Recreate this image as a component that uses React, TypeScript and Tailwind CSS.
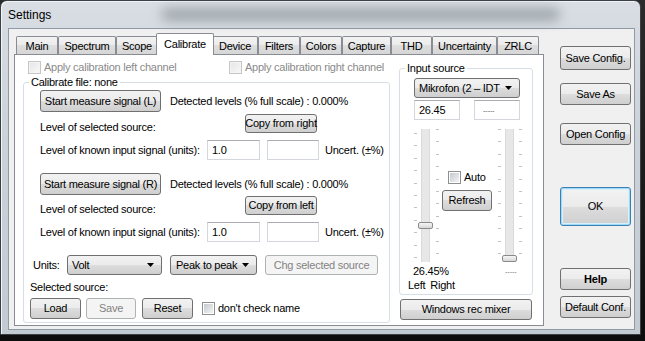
import React from "react";

type BtnProps = {
  label: string;
  className?: string;
  disabled?: boolean;
  bold?: boolean;
  focused?: boolean;
};

const Btn = ({ label, className = "", disabled, bold, focused }: BtnProps) => (
  <div
    className={`flex shrink-0 items-center justify-center rounded-[3px] border ${
      disabled
        ? "border-[#adb2b5] bg-[#f4f4f4] text-[#838383]"
        : focused
        ? "border-[#3c7fb1] bg-[linear-gradient(#f2f2f2_0%,#ebebeb_50%,#dddddd_50%,#cfcfcf_100%)] shadow-[inset_0_0_0_1px_#9fd9f8,inset_0_0_0_2px_#d6f0fc] text-black"
        : "border-[#707070] bg-[linear-gradient(#f2f2f2_0%,#ebebeb_50%,#dddddd_50%,#cfcfcf_100%)] text-black"
    } ${bold ? "font-bold" : ""} ${className}`}
  >
    {label}
  </div>
);

const Check = ({ disabled }: { disabled?: boolean }) => (
  <span
    className={`flex h-[13px] w-[13px] shrink-0 items-center justify-center border ${
      disabled ? "border-[#c6c6c6] bg-[#f4f4f4]" : "border-[#8e8f8f] bg-white"
    }`}
  >
    <span
      className={`h-[9px] w-[9px] ${
        disabled
          ? "bg-[linear-gradient(135deg,#e6e6e6,#f7f7f7)]"
          : "bg-[linear-gradient(135deg,#c4c8ce,#f4f4f4)]"
      }`}
    />
  </span>
);

const Combo = ({ label, className = "" }: { label: string; className?: string }) => (
  <div
    className={`flex h-[20px] shrink-0 items-center justify-between overflow-hidden rounded-[3px] border border-[#707070] bg-[linear-gradient(#f2f2f2_0%,#ebebeb_50%,#dddddd_50%,#cfcfcf_100%)] pl-[4px] pr-[7px] ${className}`}
  >
    <span>{label}</span>
    <svg width="7" height="4" viewBox="0 0 7 4" className="shrink-0">
      <path d="M0 0h7L3.5 4z" fill="#000" />
    </svg>
  </div>
);

const Field = ({ value, className = "" }: { value?: string; className?: string }) => (
  <div
    className={`flex h-[20px] shrink-0 items-center border border-[#d3d6dc] border-t-[#abadb3] bg-white px-[4px] ${className}`}
  >
    {value}
  </div>
);

const Ticks = () => (
  <div className="flex h-[125px] w-[3px] flex-col justify-between self-center">
    {Array.from({ length: 11 }).map((_, i) => (
      <span key={i} className="h-px w-[3px] bg-[#c2c2c2]" />
    ))}
  </div>
);

const Track = ({ thumbTop }: { thumbTop: number }) => (
  <div className="relative h-[133px] w-[9px] border-x border-[#dadada] bg-[#e7e7e7]">
    <div
      className="absolute left-[-4px] h-[7px] w-[15px] rounded-[2px] border border-[#8a8a8a] bg-[linear-gradient(#f6f6f6,#d6d6d6)]"
      style={{ top: thumbTop }}
    />
  </div>
);

const tabs = [
  { name: "Main", w: "w-[42px]" },
  { name: "Spectrum", w: "w-[58px]" },
  { name: "Scope", w: "w-[42px]" },
  { name: "Calibrate", w: "w-[58px]", active: true },
  { name: "Device", w: "w-[46px]" },
  { name: "Filters", w: "w-[42px]" },
  { name: "Colors", w: "w-[42px]" },
  { name: "Capture", w: "w-[49px]" },
  { name: "THD", w: "w-[41px]" },
  { name: "Uncertainty", w: "w-[65px]" },
  { name: "ZRLC", w: "w-[42px]" },
];

const Tabs = () => (
  <div className="flex h-[21px] items-end pl-[2px]">
    {tabs.map((t) =>
      t.active ? (
        <div
          key={t.name}
          className={`relative z-10 -mx-[2px] -mb-px flex h-[22px] shrink-0 items-center justify-center rounded-t-[2px] border border-b-0 border-[#898c95] bg-white pb-[1px] ${t.w}`}
        >
          {t.name}
        </div>
      ) : (
        <div
          key={t.name}
          className={`flex h-[18px] shrink-0 items-center justify-center rounded-t-[2px] border border-b-0 border-[#898c95] bg-[linear-gradient(#f3f3f3_0%,#ebebeb_50%,#dedede_50%,#d6d6d6_100%)] pt-[1px] ${t.w}`}
        >
          {t.name}
        </div>
      )
    )}
  </div>
);

const CalibrateGroup = () => (
  <fieldset className="m-0 h-[247px] rounded-[3px] border border-[#d5dfe5] p-0">
    <legend className="ml-[5px] px-[2px]">Calibrate file: none</legend>
    <div className="flex flex-col pl-[16px] pt-[1px]">
      <div className="flex items-center">
        <Btn label="Start measure signal (L)" className="h-[22px] w-[121px]" />
        <span className="ml-[9px]">Detected levels (% full scale) : 0.000%</span>
      </div>
      <div className="mt-[2px] flex items-start">
        <span className="mt-[7px] w-[205px]">Level of selected source:</span>
        <Btn label="Copy from right" className="h-[19px] w-[72px]" />
      </div>
      <div className="mt-[6px] flex items-center">
        <span className="w-[167px]">Level of known input signal (units):</span>
        <Field value="1.0" className="w-[53px]" />
        <Field className="ml-[7px] w-[52px]" />
        <span className="ml-[6px]">Uncert. (±%)</span>
      </div>
      <div className="mt-[13px] flex items-center">
        <Btn label="Start measure signal (R)" className="h-[22px] w-[121px]" />
        <span className="ml-[9px]">Detected levels (% full scale) : 0.000%</span>
      </div>
      <div className="mt-[1px] flex items-start">
        <span className="mt-[7px] w-[205px]">Level of selected source:</span>
        <Btn label="Copy from left" className="h-[19px] w-[72px]" />
      </div>
      <div className="mt-[6px] flex items-center">
        <span className="w-[167px]">Level of known input signal (units):</span>
        <Field value="1.0" className="w-[53px]" />
        <Field className="ml-[7px] w-[52px]" />
        <span className="ml-[6px]">Uncert. (±%)</span>
      </div>
    </div>
    <div className="flex flex-col pl-[6px]">
      <div className="mt-[13px] flex items-center">
        <span className="ml-[3px] w-[34px]">Units:</span>
        <Combo label="Volt" className="w-[95px]" />
        <Combo label="Peak to peak" className="ml-[8px] w-[87px] pl-[5px]" />
        <Btn label="Chg selected source" disabled className="ml-[8px] h-[20px] w-[113px]" />
      </div>
      <span className="mt-[6px]">Selected source:</span>
      <div className="mt-[4px] flex items-center">
        <Btn label="Load" className="h-[21px] w-[51px]" />
        <Btn label="Save" disabled className="ml-[5px] h-[21px] w-[50px]" />
        <Btn label="Reset" className="ml-[6px] h-[21px] w-[51px]" />
        <span className="ml-[9px]">
          <Check />
        </span>
        <span className="ml-[3px]">don't check name</span>
      </div>
    </div>
  </fieldset>
);

const InputSource = () => (
  <fieldset className="m-0 h-[233px] rounded-[3px] border border-[#d5dfe5] p-0">
    <legend className="ml-[5px] px-[2px]">Input source</legend>
    <div className="flex flex-col pl-[14px] pt-[3px]">
      <Combo label="Mikrofon (2 – IDT" className="w-[106px]" />
      <div className="mt-[2px] flex">
        <Field value="26.45" className="w-[46px]" />
        <Field className="ml-[14px] w-[46px] pl-[8px] text-[7px] tracking-normal text-[#555]" value="-----" />
      </div>
      <div className="mt-[9px] flex h-[133px]">
        <Ticks />
        <div className="ml-[4px]">
          <Track thumbTop={93} />
        </div>
        <div className="ml-[6px]">
          <Ticks />
        </div>
        <div className="flex w-[58px] flex-col pt-[42px]">
          <div className="ml-[9px] flex items-center">
            <Check />
            <span className="ml-[3px]">Auto</span>
          </div>
          <Btn label="Refresh" className="ml-[3px] mt-[6px] h-[21px] w-[50px]" />
        </div>
        <div className="ml-[1px]">
          <Ticks />
        </div>
        <div className="ml-[4px]">
          <Track thumbTop={126} />
        </div>
        <div className="ml-[5px]">
          <Ticks />
        </div>
      </div>
      <div className="mt-[3px] flex items-center">
        <span className="-ml-px w-[92px]">26.45%</span>
        <span className="text-[7px] tracking-normal text-[#777]">-----</span>
      </div>
      <div className="-ml-[6px] mt-[1px] flex gap-[5px]">
        <span>Left</span>
        <span>Right</span>
      </div>
    </div>
  </fieldset>
);

export default function App() {
  return (
    <div className="h-[341px] w-[645px] overflow-hidden whitespace-nowrap bg-[linear-gradient(180deg,#2b2b2b,#0d0d0d)] font-['Liberation_Sans',Arial,sans-serif] text-[11px] leading-[13px] tracking-[-0.25px] text-black">
      <div className="flex h-[335px] w-[641px] flex-col rounded-t-[7px] border border-[#3b4047] bg-[linear-gradient(180deg,#d8dee3_0%,#cbd2d8_40%,#c3cbd2_100%)] shadow-[inset_1px_1px_0_#f2f5f7]">
        <div className="flex h-[27px] shrink-0 items-center pl-[7px]">
          <span className="text-[12px] leading-[14px] tracking-normal">Settings</span>
          <div className="ml-[110px] mr-[80px] h-[13px] flex-1 rounded-full bg-[#7b8289]/60 blur-[6px]" />
        </div>
        <div className="ml-[7px] mr-[5px] flex h-[302px] border border-[#8f9aa5] bg-[#f0f0f0]">
          <div className="ml-[5px] mt-[4px] flex w-[530px] flex-col">
            <Tabs />
            <div className="flex h-[272px] border border-[#898c95] bg-white pl-[8px] pt-[6px]">
              <div className="flex w-[367px] flex-col">
                <div className="flex h-[13px] items-center">
                  <div className="flex w-[206px] items-center pl-[5px]">
                    <Check disabled />
                    <span className="ml-[3px] text-[#8a8a8a]">Apply calibration left channel</span>
                  </div>
                  <Check disabled />
                  <span className="ml-[3px] text-[#8a8a8a]">Apply calibration right channel</span>
                </div>
                <div className="mt-[2px]">
                  <CalibrateGroup />
                </div>
              </div>
              <div className="ml-[9px] mt-[1px] flex w-[134px] flex-col">
                <InputSource />
                <Btn label="Windows rec mixer" className="ml-[1px] mt-[4px] h-[21px] w-[132px]" />
              </div>
            </div>
          </div>
          <div className="ml-[16px] flex w-[71px] flex-col">
            <Btn label="Save Config." className="mt-[17px] h-[24px] w-[71px]" />
            <Btn label="Save As" className="mt-[13px] h-[22px] w-[71px]" />
            <Btn label="Open Config" className="mt-[18px] h-[22px] w-[71px]" />
            <Btn label="OK" focused className="mt-[42px] h-[39px] w-[71px]" />
            <Btn label="Help" bold className="mt-[42px] h-[22px] w-[71px]" />
            <Btn label="Default Conf." className="mt-[6px] h-[22px] w-[71px]" />
          </div>
        </div>
      </div>
    </div>
  );
}
